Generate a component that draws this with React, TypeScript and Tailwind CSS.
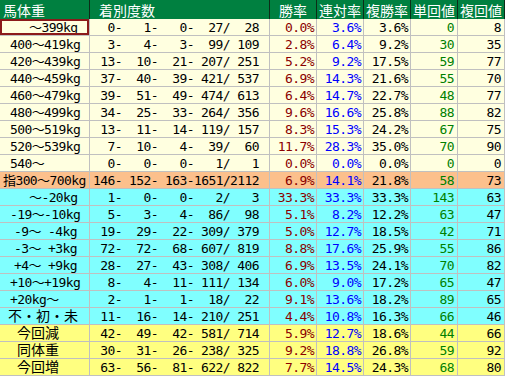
import React from "react";

type Row = {
  label: string;
  pl: string;
  jp?: boolean;
  cells?: boolean;
  n: [number, number, number, number, number];
  r: [string, string, string];
  t: number;
  f: number;
  bg: string;
  sel?: boolean;
};

const CREAM = "bg-[#ffffe0]";
const ORANGE = "bg-[#fcc08c]";
const CYAN = "bg-[#80ffff]";
const YELLOW = "bg-[#ffff80]";

const rows: Row[] = [
  { label: "～399kg", pl: "pl-[29px]", n: [0, 1, 0, 27, 28], r: ["0.0%", "3.6%", "3.6%"], t: 0, f: 8, bg: CREAM, sel: true },
  { label: "400～419kg", pl: "pl-[10px]", n: [3, 4, 3, 99, 109], r: ["2.8%", "6.4%", "9.2%"], t: 30, f: 35, bg: CREAM },
  { label: "420～439kg", pl: "pl-[10px]", n: [13, 10, 21, 207, 251], r: ["5.2%", "9.2%", "17.5%"], t: 59, f: 77, bg: CREAM },
  { label: "440～459kg", pl: "pl-[10px]", n: [37, 40, 39, 421, 537], r: ["6.9%", "14.3%", "21.6%"], t: 55, f: 70, bg: CREAM },
  { label: "460～479kg", pl: "pl-[10px]", n: [39, 51, 49, 474, 613], r: ["6.4%", "14.7%", "22.7%"], t: 48, f: 77, bg: CREAM },
  { label: "480～499kg", pl: "pl-[10px]", n: [34, 25, 33, 264, 356], r: ["9.6%", "16.6%", "25.8%"], t: 88, f: 82, bg: CREAM },
  { label: "500～519kg", pl: "pl-[10px]", n: [13, 11, 14, 119, 157], r: ["8.3%", "15.3%", "24.2%"], t: 67, f: 75, bg: CREAM },
  { label: "520～539kg", pl: "pl-[10px]", n: [7, 10, 4, 39, 60], r: ["11.7%", "28.3%", "35.0%"], t: 70, f: 90, bg: CREAM },
  { label: "540～", pl: "pl-[10px]", n: [0, 0, 0, 1, 1], r: ["0.0%", "0.0%", "0.0%"], t: 0, f: 0, bg: CREAM },
  { label: "指300～700kg", pl: "pl-[3px]", n: [146, 152, 163, 1651, 2112], r: ["6.9%", "14.1%", "21.8%"], t: 58, f: 73, bg: ORANGE },
  { label: "～-20kg", pl: "pl-[29px]", n: [1, 0, 0, 2, 3], r: ["33.3%", "33.3%", "33.3%"], t: 143, f: 63, bg: CYAN },
  { label: "-19～-10kg", pl: "pl-[10px]", n: [5, 3, 4, 86, 98], r: ["5.1%", "8.2%", "12.2%"], t: 63, f: 47, bg: CYAN },
  { label: "-9～ -4kg", pl: "pl-[14px]", n: [19, 29, 22, 309, 379], r: ["5.0%", "12.7%", "18.5%"], t: 42, f: 71, bg: CYAN },
  { label: "-3～ +3kg", pl: "pl-[14px]", n: [72, 72, 68, 607, 819], r: ["8.8%", "17.6%", "25.9%"], t: 55, f: 86, bg: CYAN },
  { label: "+4～ +9kg", pl: "pl-[14px]", n: [28, 27, 43, 308, 406], r: ["6.9%", "13.5%", "24.1%"], t: 70, f: 82, bg: CYAN },
  { label: "+10～+19kg", pl: "pl-[10px]", n: [8, 4, 11, 111, 134], r: ["6.0%", "9.0%", "17.2%"], t: 65, f: 47, bg: CYAN },
  { label: "+20kg～", pl: "pl-[10px]", n: [2, 1, 1, 18, 22], r: ["9.1%", "13.6%", "18.2%"], t: 89, f: 65, bg: CYAN },
  { label: "不・初・未", pl: "pl-[8px]", jp: true, cells: true, n: [11, 16, 14, 210, 251], r: ["4.4%", "10.8%", "16.3%"], t: 66, f: 46, bg: CYAN },
  { label: "今回減", pl: "pl-[17px]", jp: true, n: [42, 49, 42, 581, 714], r: ["5.9%", "12.7%", "18.6%"], t: 44, f: 66, bg: YELLOW },
  { label: "同体重", pl: "pl-[17px]", jp: true, n: [30, 31, 26, 238, 325], r: ["9.2%", "18.8%", "26.8%"], t: 59, f: 92, bg: YELLOW },
  { label: "今回増", pl: "pl-[17px]", jp: true, n: [63, 56, 81, 622, 822], r: ["7.7%", "14.5%", "24.3%"], t: 68, f: 80, bg: YELLOW },
];

const MONO = "[font-family:'DejaVu_Sans_Mono','Noto_Sans_CJK_JP',monospace] text-[13px] tracking-[-0.6px]";
const JPL = "[font-family:'DejaVu_Sans_Mono','Noto_Sans_CJK_JP',monospace] text-[14px]";
const JP = "[font-family:'Noto_Sans_CJK_JP',sans-serif] text-[14px]";

function Header() {
  const hc = "shrink-0 h-full border-r border-[#0c2d18] flex items-center";
  return (
    <div className={`flex h-[19px] bg-[#008040] text-white leading-none ${JP}`}>
      <div className={`${hc} w-[90px] pl-[3px]`}>馬体重</div>
      <div className={`${hc} w-[180px] pl-[9px]`}>着別度数</div>
      <div className={`${hc} w-[47px] justify-center`}>勝率</div>
      <div className={`${hc} w-[47px] justify-center`}>連対率</div>
      <div className={`${hc} w-[47px] justify-center`}>複勝率</div>
      <div className={`${hc} w-[47px] justify-center`}>単回値</div>
      <div className={`${hc} w-[47px] justify-center`}>複回値</div>
    </div>
  );
}

function DataRow({ row }: { row: Row }) {
  const cell = "shrink-0 h-full border-r border-[#c0c0c0] flex items-center";
  return (
    <div className={`flex h-[17px] border-b border-[#c0c0c0] leading-none text-black ${row.bg}`}>
      <div className={`${cell} relative w-[90px] ${row.pl} whitespace-pre ${row.jp ? JPL : MONO}`}>
        {row.cells
          ? Array.from(row.label).map((ch, i) => (
              <span key={i} className="w-[14px] text-center">
                {ch}
              </span>
            ))
          : row.label}
        {row.sel && <div className="absolute inset-0 border-2 border-[#8b1a1a]" />}
      </div>
      <div className={`${cell} w-[180px] pl-[3px] ${MONO}`}>
        <span className="w-[29px] text-right">{row.n[0]}-</span>
        <span className="w-[36px] text-right">{row.n[1]}-</span>
        <span className="w-[36px] text-right">{row.n[2]}-</span>
        <span className="w-[36px] text-right">{row.n[3]}/</span>
        <span className="w-[29px] text-right">{row.n[4]}</span>
      </div>
      <div className={`${cell} w-[47px] justify-end pr-[2px] text-[#8b0000] ${MONO}`}>{row.r[0]}</div>
      <div className={`${cell} w-[47px] justify-end pr-[2px] text-[#0000ff] ${MONO}`}>{row.r[1]}</div>
      <div className={`${cell} w-[47px] justify-end pr-[2px] text-black ${MONO}`}>{row.r[2]}</div>
      <div className={`${cell} w-[47px] justify-end pr-[3px] text-[#008000] ${MONO}`}>{row.t}</div>
      <div className={`${cell} w-[47px] justify-end pr-[3px] text-black ${MONO}`}>{row.f}</div>
    </div>
  );
}

export default function App() {
  return (
    <div className="w-[507px] h-[377px] bg-white overflow-hidden">
      <div className="w-[505px] flex flex-col">
        <Header />
        {rows.map((row, i) => (
          <DataRow key={i} row={row} />
        ))}
      </div>
    </div>
  );
}
